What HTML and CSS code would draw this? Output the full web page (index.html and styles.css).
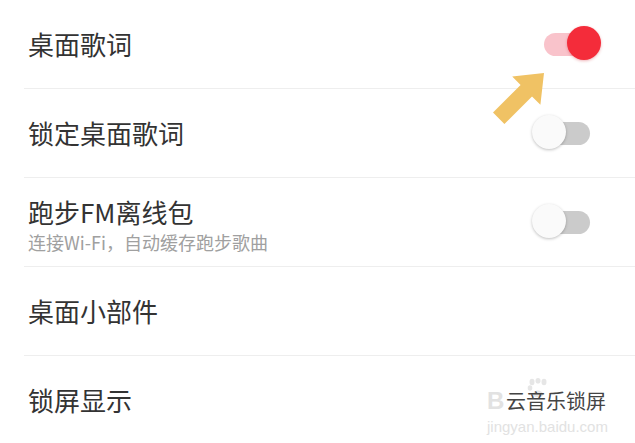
FILE: index.html
```html
<!DOCTYPE html>
<html lang="zh-CN">
<head>
  <meta charset="UTF-8">
  <meta name="viewport" content="width=device-width, initial-scale=1.0">
  <title>设置</title>
  <link rel="stylesheet" href="styles.css">
</head>
<body>
  <ul class="settings">
    <li class="row">
      <span class="title">桌面歌词</span>
      <span class="toggle on"><span class="track"></span><span class="knob"></span></span>
    </li>
    <li class="row">
      <span class="title">锁定桌面歌词</span>
      <span class="toggle"><span class="track"></span><span class="knob"></span></span>
    </li>
    <li class="row">
      <div class="text two-line">
        <div class="title">跑步FM离线包</div>
        <div class="sub">连接Wi-Fi，自动缓存跑步歌曲</div>
      </div>
      <span class="toggle"><span class="track"></span><span class="knob"></span></span>
    </li>
    <li class="row">
      <span class="title">桌面小部件</span>
    </li>
    <li class="row">
      <span class="title">锁屏显示</span>
      <span class="value">云音乐锁屏</span>
      <div class="watermark">
        <span class="wm-bai">B</span>
        <svg class="wm-paw" width="22" height="20" viewBox="0 0 22 20">
          <ellipse cx="5" cy="4" rx="2.5" ry="3.2" />
          <ellipse cx="11" cy="2.8" rx="2.5" ry="2.8" />
          <ellipse cx="17" cy="4" rx="2.5" ry="3.2" />
          <ellipse cx="3" cy="10" rx="2.3" ry="2.8" />
          <path d="M6 17 C6 11 16 11 16 17 C16 20 6 20 6 17 Z" />
        </svg>
        <span class="wm-url">jingyan.baidu.com</span>
      </div>
    </li>
  </ul>

  <svg class="arrow" width="635" height="443" viewBox="0 0 635 443">
    <polygon points="544,73 540.4,104.8 532,96.4 504.4,124 493,112.6 520.6,85 512.2,76.6" />
  </svg>
</body>
</html>
```

FILE: styles.css
```css
body {
  margin: 0;
  background: #fff;
  font-family: "Noto Sans CJK SC", "Noto Sans", sans-serif;
  color: #333;
  overflow: hidden;
}
.settings {
  list-style: none;
  margin: 0;
  padding: 0;
}
.row {
  position: relative;
  display: flex;
  align-items: center;
  justify-content: space-between;
  height: 88px;
  margin-left: 24px;
  padding: 0 33px 0 4px;
  border-bottom: 1px solid #eeeeee;
}
.title {
  font-size: 26px;
  line-height: 30px;
  color: #333;
}
.two-line {
  padding-top: 6px;
}
.sub {
  margin-top: 4px;
  font-size: 18px;
  line-height: 22px;
  color: #a0a0a0;
}
.value {
  font-size: 20px;
  color: #444;
  margin-right: -4px;
  position: relative;
  z-index: 1;
}

/* switches */
.toggle {
  position: relative;
  width: 70px;
  height: 36px;
}
.toggle .track {
  position: absolute;
  left: 12px;
  top: 7px;
  width: 46px;
  height: 23px;
  border-radius: 12px;
  background: #cbcbcb;
}
.toggle .knob {
  position: absolute;
  left: 0;
  top: 0;
  width: 34px;
  height: 34px;
  border-radius: 50%;
  background: #fafafa;
  box-shadow: 0 1px 3px rgba(0, 0, 0, 0.25);
}
.toggle.on .track {
  background: #f9c3cb;
}
.toggle.on .knob {
  left: 35px;
  background: #f42c3a;
  box-shadow: 0 1px 3px rgba(200, 0, 20, 0.3);
}

/* watermark */
.watermark {
  position: absolute;
  left: 463px;
  top: 22px;
  width: 120px;
  height: 60px;
  color: #e2e2e2;
}
.wm-bai {
  position: absolute;
  left: 0;
  top: 8px;
  font-family: "Liberation Sans", sans-serif;
  font-weight: bold;
  font-size: 24px;
  line-height: 30px;
}
.wm-paw {
  position: absolute;
  left: 40px;
  top: 0;
  fill: #e6e6e6;
}
.wm-url {
  position: absolute;
  left: 0;
  top: 40px;
  font-family: "Liberation Sans", sans-serif;
  font-size: 15px;
  line-height: 18px;
  white-space: nowrap;
}

.arrow {
  position: absolute;
  left: 0;
  top: 0;
  pointer-events: none;
}
.arrow polygon {
  fill: #f0c264;
}
```
